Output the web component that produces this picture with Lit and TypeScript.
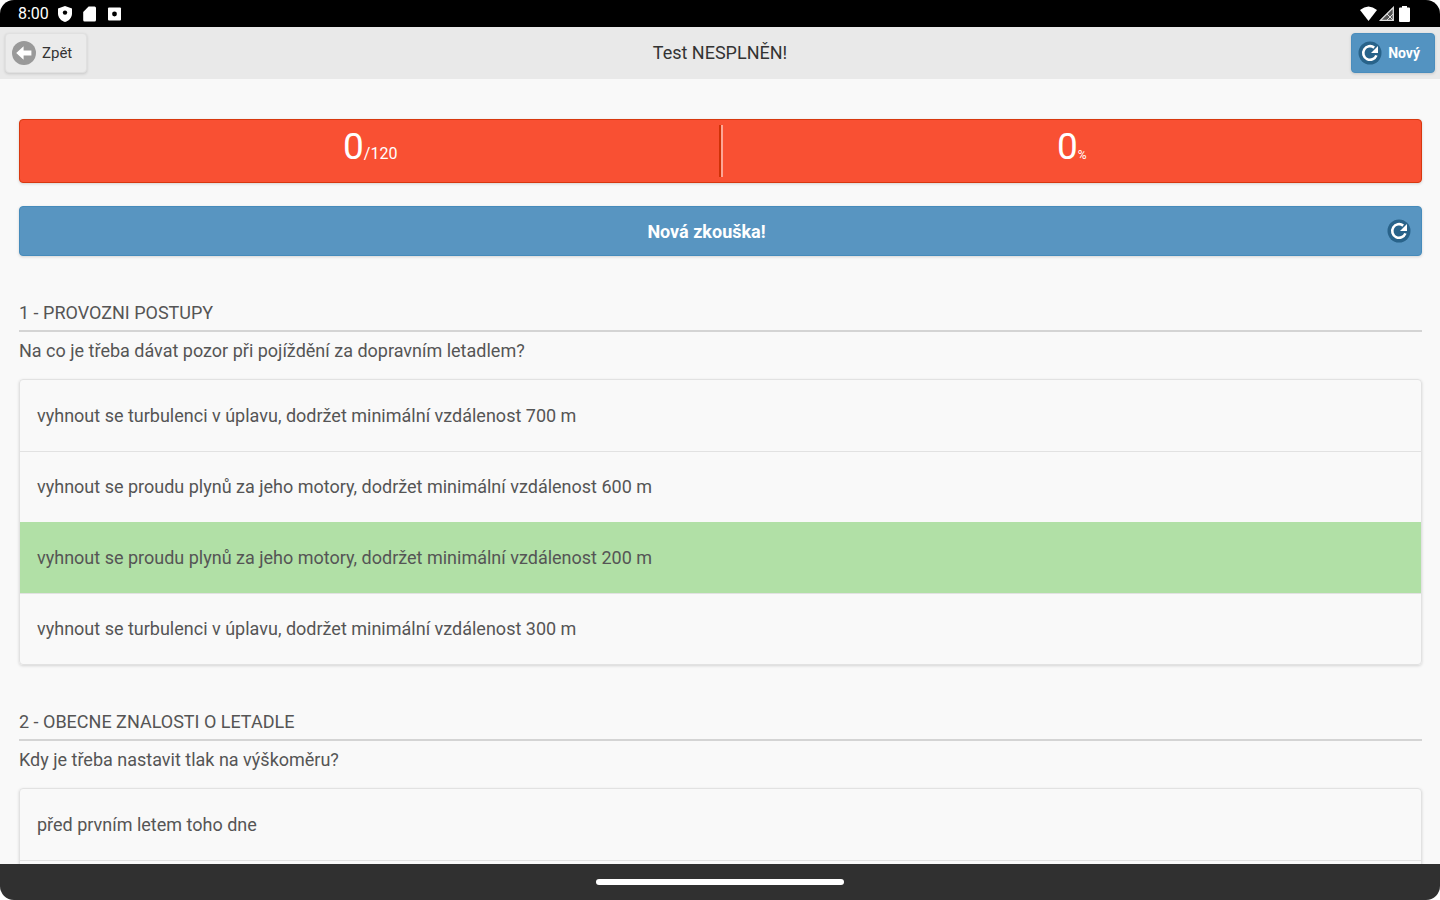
import { LitElement, html, css } from "lit";
import { customElement, property } from "lit/decorators.js";

interface Question {
  title: string;
  text: string;
  answers: string[];
  correct: number;
}

const QUESTIONS: Question[] = [
  {
    title: "1 - PROVOZNI POSTUPY",
    text: "Na co je třeba dávat pozor při pojíždění za dopravním letadlem?",
    answers: [
      "vyhnout se turbulenci v úplavu, dodržet minimální vzdálenost 700 m",
      "vyhnout se proudu plynů za jeho motory, dodržet minimální vzdálenost 600 m",
      "vyhnout se proudu plynů za jeho motory, dodržet minimální vzdálenost 200 m",
      "vyhnout se turbulenci v úplavu, dodržet minimální vzdálenost 300 m",
    ],
    correct: 2,
  },
  {
    title: "2 - OBECNE ZNALOSTI O LETADLE",
    text: "Kdy je třeba nastavit tlak na výškoměru?",
    answers: ["před prvním letem toho dne", ""],
    correct: -1,
  },
];

const refreshIcon = html`<svg width="24" height="24" viewBox="0 0 24 24" aria-hidden="true">
  <circle cx="12" cy="12" r="11.5" fill="#215a80" fill-opacity=".85" />
  <path d="M18.4 14.4A6.8 6.8 0 1 1 16.2 6.6" fill="none" stroke="#fff" stroke-width="2.6" />
  <path d="M20 5V12H13Z" fill="#fff" />
</svg>`;

const backIcon = html`<svg width="24" height="24" viewBox="0 0 24 24" aria-hidden="true">
  <circle cx="12" cy="12" r="12" fill="#999" />
  <path d="M4.2 12L11.6 5.2V9.4H19.4V14.6H11.6V18.8Z" fill="#fff" />
</svg>`;

@customElement("status-bar")
export class StatusBar extends LitElement {
  static styles = css`
    :host {
      display: flex;
      justify-content: space-between;
      align-items: center;
      height: 27px;
      padding: 0 28px 0 18px;
      background: #000;
      color: #fff;
      font-size: 16px;
    }
    .group {
      display: flex;
      align-items: center;
    }
    .left {
      gap: 9px;
    }
    .right {
      gap: 2px;
    }
    svg {
      display: block;
    }
  `;
  render() {
    return html`
      <div class="group left">
        <span>8:00</span>
        <svg width="14" height="16" viewBox="0 0 14 16"><path d="M7 0L14 2.6V7.4C14 11.4 11 14.8 7 16C3 14.8 0 11.4 0 7.4V2.6Z" fill="#fff" /><circle cx="7" cy="6.6" r="2.2" /></svg>
        <svg width="17" height="16" viewBox="0 0 17 16"><path d="M7.6 .5H13.6Q15 .5 15 2V14Q15 15.5 13.6 15.5H3.6Q2.2 15.5 2.2 14V6Z" fill="#fff" /></svg>
        <svg width="15" height="14" viewBox="0 0 15 14"><rect x="1" y=".5" width="13" height="13" rx="1" fill="#fff" /><circle cx="7.5" cy="7" r="2.4" /></svg>
      </div>
      <div class="group right">
        <svg width="17" height="15" viewBox="0 0 17 15"><path d="M0 4Q8.500 -3 17 4L8.500 15Z" fill="#fff" /></svg>
        <svg width="16" height="15" viewBox="0 0 16 15"><path d="M1.500 14.300L14.300 1.500V14.300Z" fill="#555" stroke="#ddd" stroke-width="1.300" /><path d="M8 8L14 14M14 8L8 14" stroke="#ddd" /></svg>
        <svg width="15" height="16" viewBox="0 0 15 16"><path d="M5 0H10V1.500H12Q13 1.500 13 2.500V15Q13 16 12 16H3Q2 16 2 15V2.500Q2 1.500 3 1.500H5Z" fill="#fff" /></svg>
      </div>
    `;
  }
}

@customElement("question-block")
export class QuestionBlock extends LitElement {
  @property({ attribute: false }) question!: Question;

  static styles = css`
    :host {
      display: block;
      color: #555;
    }
    .title {
      margin: 0;
      padding-bottom: 5px;
      border-bottom: 2px solid #d4d4d4;
      font-size: 18px;
      font-weight: 400;
      line-height: 24px;
    }
    .text {
      margin: 0 0 16px;
      padding-top: 7px;
      font-size: 18px;
      line-height: 24px;
    }
    .answers {
      margin: 0;
      padding: 0;
      list-style: none;
      border: 1px solid #e2e2e2;
      border-radius: 4px;
      box-shadow: 0 1px 3px rgba(0, 0, 0, 0.15);
      overflow: hidden;
    }
    .answer {
      box-sizing: border-box;
      height: 71px;
      padding: 0 17px;
      display: flex;
      align-items: center;
      font-size: 18px;
      line-height: 24px;
    }
    .answer + .answer {
      border-top: 1px solid #e2e2e2;
    }
    .answer.correct {
      background: #b1e0a6;
      border-top-color: #b1e0a6;
    }
  `;
  render() {
    const q = this.question;
    return html`
      <h2 class="title">${q.title}</h2>
      <p class="text">${q.text}</p>
      <ul class="answers">
        ${q.answers.map(
          (a, i) => html`<li class="answer ${i === q.correct ? "correct" : ""}">${a}</li>`
        )}
      </ul>
    `;
  }
}

@customElement("app-root")
export class AppRoot extends LitElement {
  static styles = css`
    :host {
      display: flex;
      flex-direction: column;
      height: 100vh;
      overflow: hidden;
      border-radius: 14px;
      background: #f9f9f9;
      font-family: Roboto, "Liberation Sans", sans-serif;
    }
    svg {
      display: block;
      flex: none;
    }
    button {
      font-family: inherit;
      cursor: pointer;
    }
    .header {
      display: grid;
      grid-template-columns: 1fr auto 1fr;
      align-items: center;
      height: 52px;
      flex: none;
      padding: 0 5px;
      box-sizing: border-box;
      background: #e9e9e9;
    }
    .heading {
      margin: 0;
      font-size: 18px;
      font-weight: 400;
      line-height: 24px;
      color: #333;
    }
    .small {
      display: flex;
      align-items: center;
      gap: 6px;
      height: 40px;
      padding: 0 14px 0 6px;
      border: 1px solid #e0e0e0;
      border-radius: 4px;
      font-size: 15px;
      box-shadow: 0 1px 3px rgba(0, 0, 0, 0.15);
    }
    .back {
      justify-self: start;
      background: #ebebeb;
      color: #333;
    }
    .new {
      justify-self: end;
      background: #5393c1;
      border-color: #4a8dbd;
      color: #fff;
      font-size: 14px;
      font-weight: 700;
    }
    .content {
      flex: 1;
      min-height: 0;
      overflow: hidden;
      padding: 40px 18px 0 19px;
    }
    .score {
      display: grid;
      grid-template-columns: 1fr 1fr;
      box-sizing: border-box;
      height: 64px;
      padding: 5px 0;
      border: 1px solid #d8380f;
      border-radius: 4px;
      background: #f95033;
      color: #fff;
      box-shadow: 0 1px 3px rgba(0, 0, 0, 0.15);
    }
    .cell {
      text-align: center;
      font-size: 37px;
      line-height: 44px;
    }
    .cell + .cell {
      border-left: 2px solid #fda695;
      box-shadow: -2px 0 0 #cf3208;
    }
    .unit {
      font-size: 16px;
    }
    .percent {
      font-size: 12px;
    }
    .exam {
      display: flex;
      align-items: center;
      width: 100%;
      height: 50px;
      margin: 23px 0 45px;
      padding: 0 10px 0 6px;
      border: 1px solid #468bbb;
      border-radius: 4px;
      background: #5895c1;
      color: #fff;
      font-size: 18px;
      font-weight: 700;
      box-shadow: 0 1px 3px rgba(0, 0, 0, 0.15);
    }
    .label {
      flex: 1;
      text-align: center;
    }
    .block {
      margin-bottom: 45px;
    }
    .navbar {
      display: flex;
      flex: none;
      align-items: center;
      justify-content: center;
      height: 36px;
      background: #303030;
    }
    .handle {
      width: 248px;
      height: 6px;
      border-radius: 3px;
      background: #fff;
    }
  `;
  render() {
    return html`
      <status-bar></status-bar>
      <header class="header">
        <button class="small back">${backIcon}Zpět</button>
        <h1 class="heading">Test NESPLNĚN!</h1>
        <button class="small new">${refreshIcon}Nový</button>
      </header>
      <main class="content">
        <div class="score">
          <div class="cell">0<span class="unit">/120</span></div>
          <div class="cell">0<span class="percent">%</span></div>
        </div>
        <button class="exam"><span class="label">Nová zkouška!</span>${refreshIcon}</button>
        ${QUESTIONS.map((q) => html`<question-block class="block" .question=${q}></question-block>`)}
      </main>
      <footer class="navbar"><div class="handle"></div></footer>
    `;
  }
}
